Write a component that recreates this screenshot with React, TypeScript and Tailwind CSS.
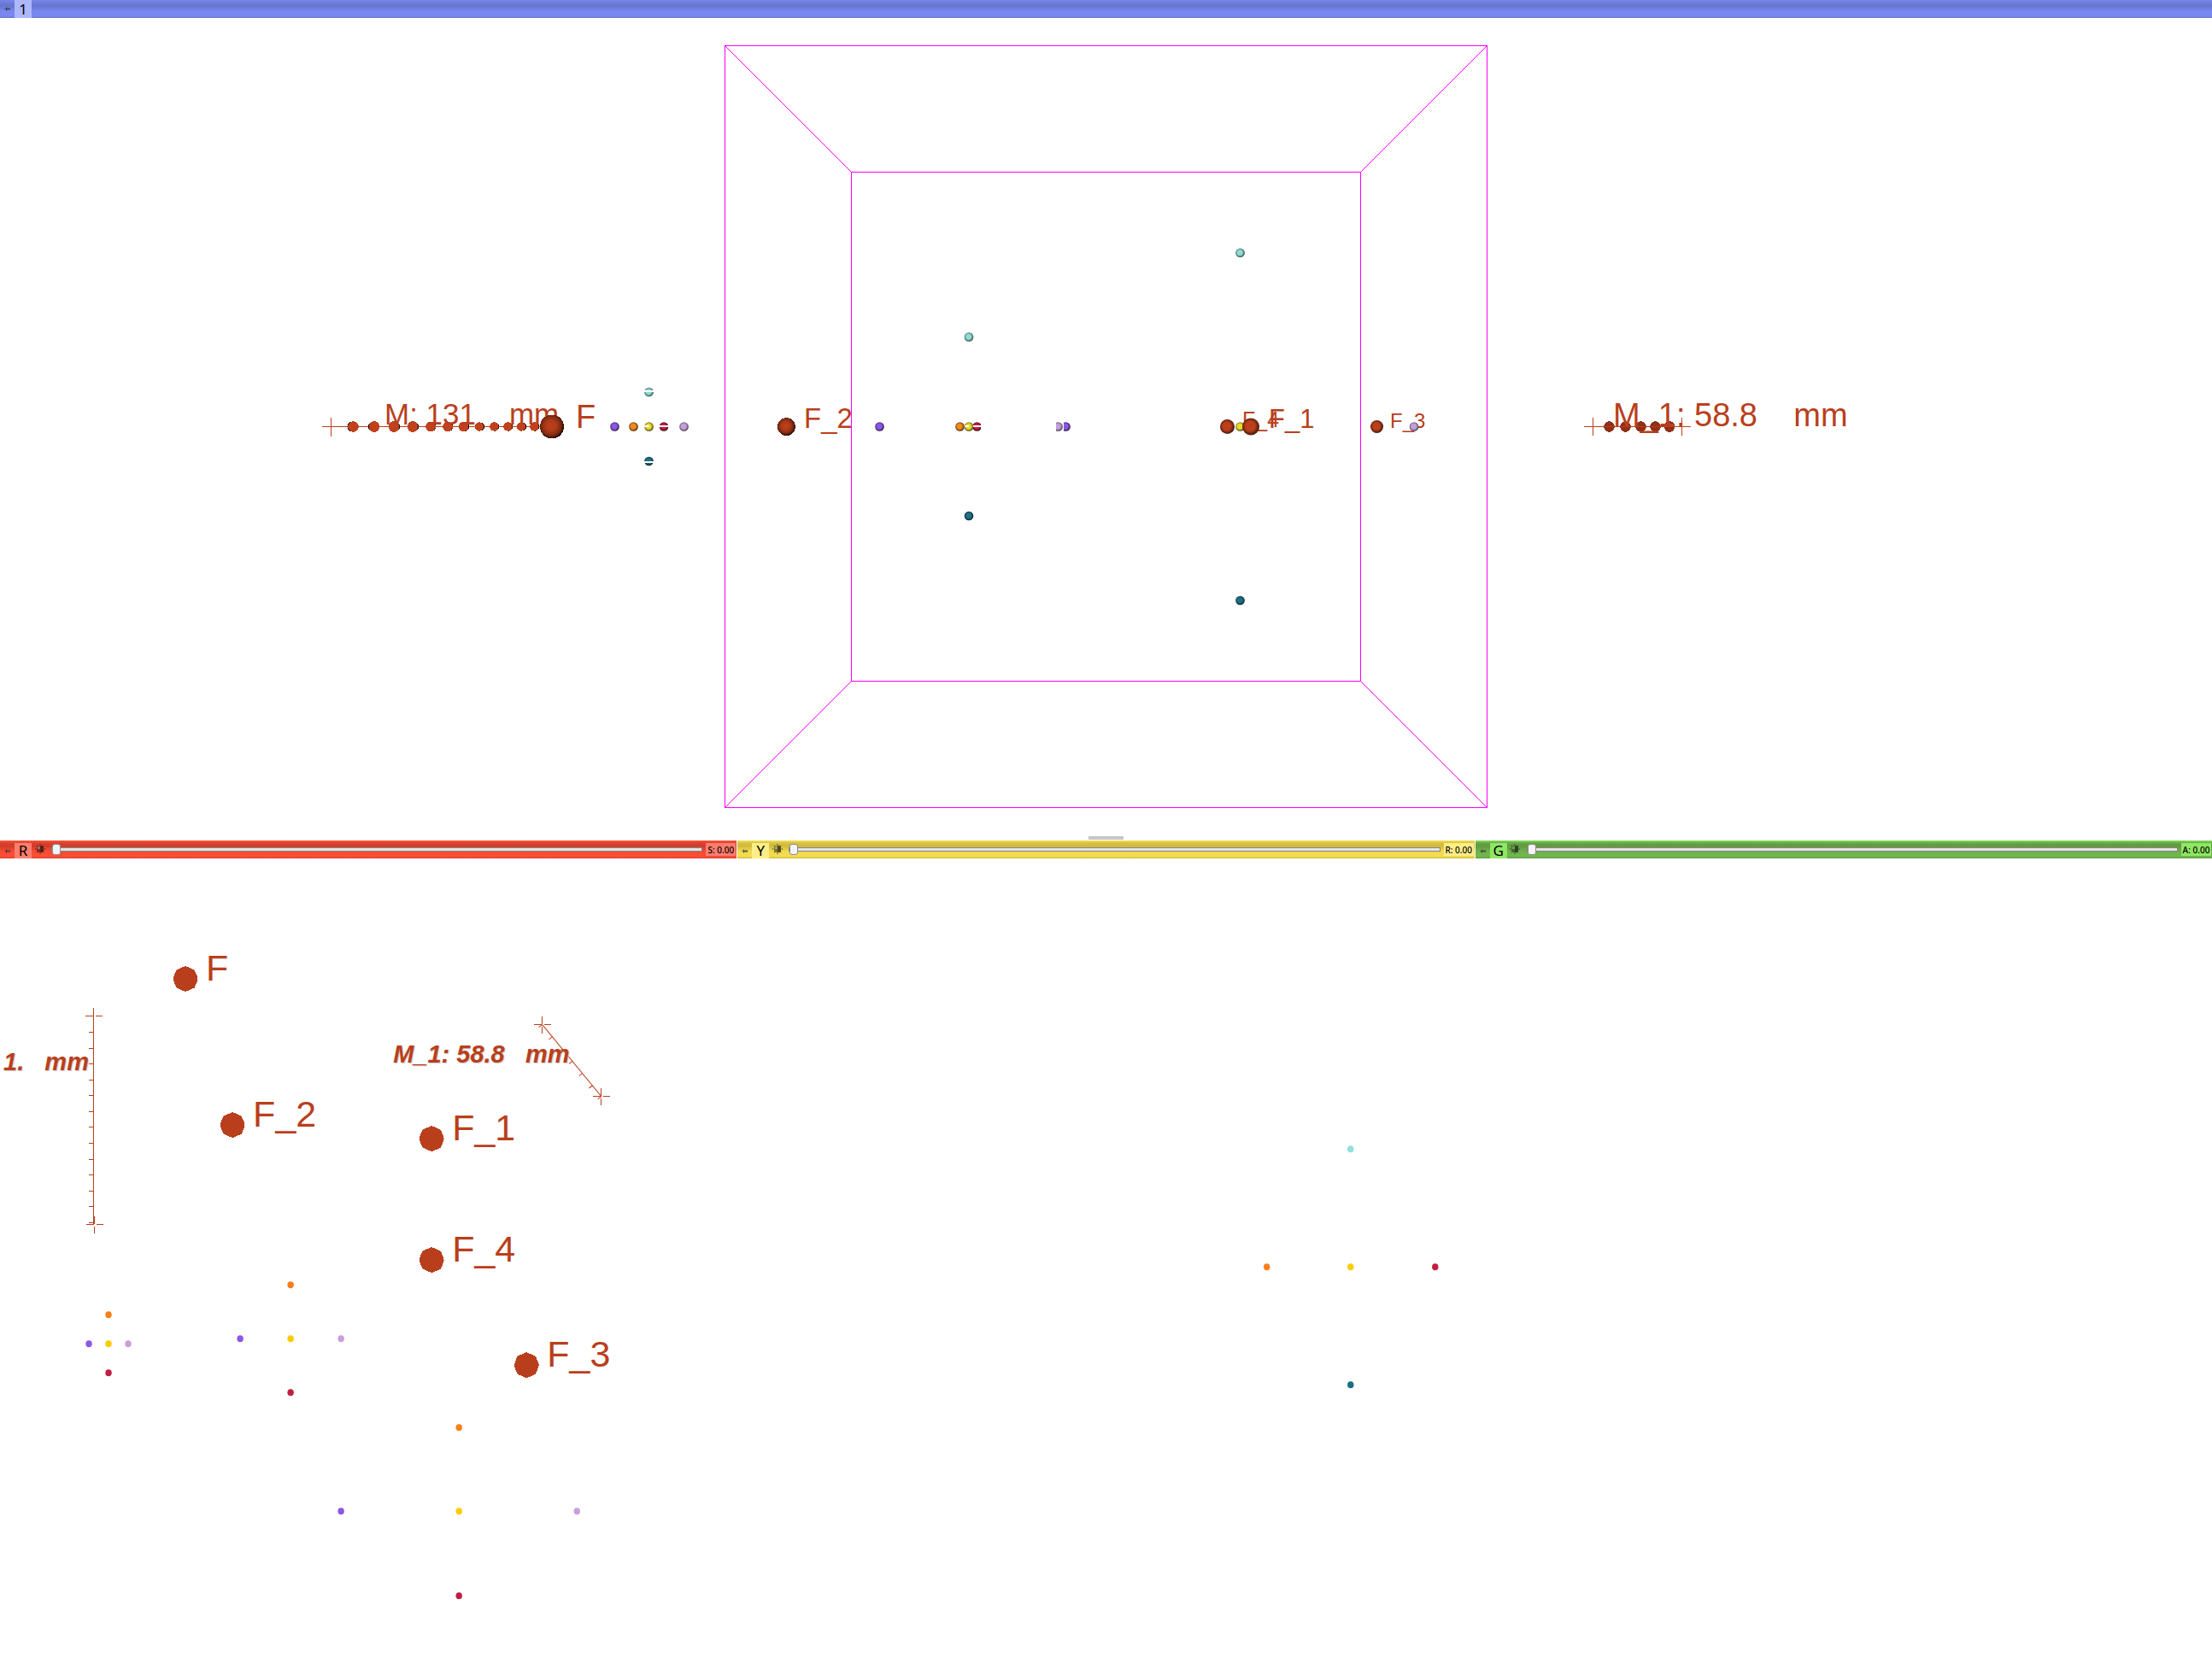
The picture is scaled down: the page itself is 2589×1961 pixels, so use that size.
import React from "react";

const RUST = "#b93f1c";
const ARIAL = '"Liberation Sans", Arial, sans-serif';

const COLORS = {
  rust: "#bc3f1b",
  purple: "#8c56e6",
  orange: "#f08a1c",
  yellow: "#eadc2c",
  crimson: "#c01f42",
  lavender: "#c3a0da",
  aqua: "#8edcd2",
  teal: "#1f7186",
} as const;

type ColorName = keyof typeof COLORS;

const EDGES: Record<ColorName, string> = {
  rust: "#5a1d0c",
  purple: "#3f2768",
  orange: "#6b3d0c",
  yellow: "#6a6414",
  crimson: "#560e1e",
  lavender: "#665472",
  aqua: "#3d6b66",
  teal: "#0c2f38",
};

const FLAT: Record<ColorName, string> = {
  rust: RUST,
  purple: "#8c56e6",
  orange: "#f97f1a",
  yellow: "#fbcc00",
  crimson: "#c01f42",
  lavender: "#c89fdc",
  aqua: "#8fe0da",
  teal: "#186f85",
};

function Sphere({ x, y = 499.5, r = 5.3, c }: { x: number; y?: number; r?: number; c: ColorName }) {
  return <circle cx={x} cy={y} r={r} fill={`url(#ball-${c})`} />;
}

function Label({ x, y, size, children, bold }: { x: number; y: number; size: number; children: string; bold?: boolean }) {
  return (
    <text
      x={x}
      y={y}
      fontSize={size}
      fontFamily={ARIAL}
      fill={RUST}
      fontWeight={bold ? 700 : 400}
      fontStyle={bold ? "italic" : "normal"}
      className={bold ? "whitespace-pre [text-shadow:1px_1px_1px_#c9c9c9]" : "whitespace-pre"}
    >
      {children}
    </text>
  );
}

function Dot({ x, y, c }: { x: number; y: number; c: ColorName }) {
  return <ellipse cx={x} cy={y} rx={3.7} ry={4} fill={FLAT[c]} />;
}

function Cross({ x, y }: { x: number; y: number }) {
  return (
    <path
      d={`M${x - 9.5} ${y}h8.5M${x + 2} ${y}h8.5M${x} ${y - 9.5}v8.5M${x} ${y + 2}v8.5`}
      stroke={RUST}
      fill="none"
      shapeRendering="crispEdges"
    />
  );
}

function Fiducial({ x, y, name }: { x: number; y: number; name: string }) {
  return (
    <>
      <path
        transform={`translate(${x} ${y})`}
        d="M0 -15L5 -13L10.5 -10.5L13 -5L14.5 0L13 5L10.5 10.5L5 13L0 15L-5 13L-10.5 10.5L-13 5L-14.5 0L-13 -5L-10.5 -10.5L-5 -13Z"
        fill={RUST}
        shapeRendering="crispEdges"
      />
      <Label x={x + 24} y={y + 2} size={43}>
        {name}
      </Label>
    </>
  );
}

function View3D() {
  const mDots = [413.5, 438, 461, 483, 504, 524, 542.5, 561, 578.5, 594.5, 610, 625.5];
  const m1Dots = [1883.5, 1902.5, 1920.5, 1937.5, 1954];
  return (
    <svg viewBox="0 21 2589 958" className="block h-auto w-full" role="img" aria-label="3D view">
      <defs>
        {(Object.keys(COLORS) as ColorName[]).map((k) => (
          <radialGradient key={k} id={`ball-${k}`} cx="0.47" cy="0.47" r="0.54">
            <stop offset="0" stopColor={COLORS[k]} />
            <stop offset="0.5" stopColor={COLORS[k]} />
            <stop offset="0.9" stopColor={EDGES[k]} />
            <stop offset="1" stopColor="#140a08" />
          </radialGradient>
        ))}
        <radialGradient id="ball-big" cx="0.46" cy="0.46" r="0.56">
          <stop offset="0" stopColor="#bc3f1b" />
          <stop offset="0.4" stopColor="#b03b19" />
          <stop offset="0.75" stopColor="#7a2811" />
          <stop offset="1" stopColor="#160603" />
        </radialGradient>
        <clipPath id="cut-crimson"><rect x="1130" y="490" width="18" height="20" /></clipPath>
        <clipPath id="cut-lavender"><rect x="1236" y="490" width="9" height="20" /></clipPath>
        <clipPath id="cut-purple"><rect x="1245" y="490" width="12" height="20" /></clipPath>
      </defs>

      <g stroke="#ff00ff" fill="none" shapeRendering="crispEdges">
        <rect x="848.5" y="53.5" width="892" height="892" />
        <rect x="996.5" y="201.5" width="596" height="596" />
        <path d="M848.5 53.5L996.5 201.5M1740.5 53.5L1592.5 201.5M848.5 945.5L996.5 797.5M1740.5 945.5L1592.5 797.5" />
      </g>

      <path d="M377 499.5H640M387.5 489V511" stroke={RUST} shapeRendering="crispEdges" />
      {mDots.map((x, i) => (
        <g key={x} shapeRendering="crispEdges">
          <circle cx={x + (i < 2 ? -1 : 1)} cy={499.5} r={i < 4 ? 6 : i < 7 ? 5.5 : 5} fill="#1a0805" />
          <circle cx={x} cy={499.5} r={i < 4 ? 6.3 : i < 7 ? 5.8 : 5.2} fill="#bf421d" />
        </g>
      ))}
      <Label x={450} y={497} size={35}>{"M: 131    mm"}</Label>
      <circle cx="646" cy="499.5" r="14" fill="url(#ball-big)" shapeRendering="crispEdges" />
      <Label x={674} y={501} size={38}>F</Label>

      <Sphere x={719.5} c="purple" />
      <Sphere x={741.5} c="orange" />
      <Sphere x={759.5} c="yellow" />
      <Sphere x={777} c="crimson" />
      <Sphere x={800.5} c="lavender" />
      <Sphere x={759.5} y={459} c="aqua" />
      <Sphere x={759.5} y={540} c="teal" />
      <path
        d="M754 458H766M754 541H766M771 499H783M754 499H760"
        stroke="#fff"
        strokeWidth="2"
        shapeRendering="crispEdges"
      />

      <circle cx="920.5" cy="499.5" r="10.5" fill="url(#ball-big)" shapeRendering="crispEdges" />
      <Label x={941} y={501} size={33}>F_2</Label>

      <Sphere x={1029.5} c="purple" />
      <g clipPath="url(#cut-crimson)"><Sphere x={1143.5} c="crimson" /></g>
      <Sphere x={1134} c="yellow" />
      <Sphere x={1123.5} c="orange" />
      <path d="M1129 499H1134M1139 499H1148" stroke="#fff" strokeWidth="2" shapeRendering="crispEdges" />
      <Sphere x={1134} y={394.5} c="aqua" />
      <Sphere x={1134} y={604} c="teal" />
      <g clipPath="url(#cut-lavender)"><Sphere x={1238.5} c="lavender" /></g>
      <g clipPath="url(#cut-purple)"><Sphere x={1247.5} c="purple" /></g>

      <Sphere x={1451.5} y={296} c="aqua" />
      <Sphere x={1451.5} y={703} c="teal" />
      <Label x={1454} y={500} size={25}>F_4</Label>
      <Sphere x={1451.5} c="yellow" />
      <Sphere x={1436.5} r={8.5} c="rust" />
      <Sphere x={1464} r={10} c="rust" />
      <Label x={1485} y={501} size={31}>F_1</Label>

      <Sphere x={1611.5} r={7.5} c="rust" />
      <Label x={1627} y={501} size={24}>F_3</Label>
      <Sphere x={1655} c="lavender" />

      {m1Dots.map((x) => (
        <circle key={x} cx={x} cy={499.5} r={6.3} fill="#8f3018" shapeRendering="crispEdges" />
      ))}
      <path d="M1854 499.5H1979M1864.5 489V510M1968.5 489V510" stroke={RUST} shapeRendering="crispEdges" />
      <Label x={1888} y={499} size={38}>{"M_1: 58.8    mm"}</Label>
    </svg>
  );
}

function RedSlice() {
  const ticks = [203.5, 222.5, 240.5, 259.5, 277.5, 296.5, 314.5, 333.5, 352.5, 370.5, 389.5, 407.5, 426.5];
  const diag = [0, 0.17, 0.34, 0.51, 0.68, 0.85, 1];
  return (
    <svg viewBox="0 0 862 950" className="block h-auto w-full" role="img" aria-label="Red slice view">
      <Fiducial x={217} y={141} name="F" />
      <Fiducial x={272} y={312} name="F_2" />
      <Fiducial x={505} y={328} name="F_1" />
      <Fiducial x={505} y={470} name="F_4" />
      <Fiducial x={616} y={593} name="F_3" />

      <path d="M109.5 184V428" stroke={RUST} shapeRendering="crispEdges" />
      {ticks.map((y) => (
        <path key={y} d={`M104 ${y}H109`} stroke={RUST} shapeRendering="crispEdges" />
      ))}
      <Cross x={109.5} y={184.5} />
      <Cross x={110.5} y={428.5} />
      <Label x={4} y={248} size={29} bold>{"1.   mm"}</Label>

      <path d="M634.5 194.5L703.5 278.5" stroke={RUST} />
      {diag.map((t) => (
        <path key={t} d={`M${634.5 + 69 * t} ${194.5 + 84 * t}l-4 3`} stroke={RUST} />
      ))}
      <Cross x={634.5} y={194.5} />
      <Cross x={703.5} y={278.5} />
      <Label x={460} y={239} size={29} bold>{"M_1: 58.8   mm"}</Label>

      <Dot x={127} y={534} c="orange" />
      <Dot x={104} y={568} c="purple" />
      <Dot x={127} y={568} c="yellow" />
      <Dot x={150} y={568} c="lavender" />
      <Dot x={127} y={602} c="crimson" />

      <Dot x={340} y={499} c="orange" />
      <Dot x={281} y={562} c="purple" />
      <Dot x={340} y={562} c="yellow" />
      <Dot x={399} y={562} c="lavender" />
      <Dot x={340} y={625} c="crimson" />

      <Dot x={537} y={666} c="orange" />
      <Dot x={399} y={764} c="purple" />
      <Dot x={537} y={764} c="yellow" />
      <Dot x={675} y={764} c="lavender" />
      <Dot x={537} y={863} c="crimson" />
    </svg>
  );
}

function YellowSlice() {
  return (
    <svg viewBox="0 0 862 950" className="block h-auto w-full" role="img" aria-label="Yellow slice view">
      <Dot x={717.5} y={340} c="aqua" />
      <Dot x={619.5} y={478} c="orange" />
      <Dot x={717.5} y={478} c="yellow" />
      <Dot x={816.5} y={478} c="crimson" />
      <Dot x={717.5} y={616} c="teal" />
    </svg>
  );
}

function PinButton() {
  return (
    <button type="button" aria-label="Pin" className="flex h-full w-[17px] shrink-0 items-center justify-center">
      <svg width="7" height="5" viewBox="0 0 7 5" aria-hidden="true">
        <path d="M0 2.5H2" stroke="#333" strokeOpacity="0.6" />
        <path d="M2.5 0.5V4.5" stroke="#222" strokeOpacity="0.75" />
        <path d="M3 1.5H6V3.5H3Z" fill="#444" fillOpacity="0.8" />
        <path d="M6.5 1V4" stroke="#333" strokeOpacity="0.6" />
      </svg>
    </button>
  );
}

function CenterButton({ ball }: { ball: string }) {
  return (
    <button type="button" aria-label="Fit to window" className="flex h-full w-[19px] shrink-0 items-center justify-center pb-1">
      <svg width="12" height="12" viewBox="0 0 12 12" aria-hidden="true">
        <path d="M6 0V1.2M6 10.8V12M0 6H1.2M10.8 6H12M1.8 1.8L2.6 2.6M10.2 1.8L9.4 2.6M1.8 10.2L2.6 9.4M10.2 10.2L9.4 9.4" stroke="#222" />
        <rect x="2" y="2" width="8" height="8" rx="2" fill={ball} />
        <path d="M6 2H8.5Q10 2 10 4V8Q10 10 8 10H6Z" fill="#1a1a1a" fillOpacity="0.5" />
        <rect x="3" y="3" width="3" height="3" fill="#fff" fillOpacity="0.3" />
      </svg>
    </button>
  );
}

type BarProps = { letter: string; value: string; bar: string; chip: string; ball: string };

function SliceBar({ letter, value, bar, chip, ball }: BarProps) {
  return (
    <div className={`flex h-[21px] items-stretch pt-[3px] text-black ${bar}`}>
      <PinButton />
      <span className={`flex w-5 shrink-0 items-center justify-center pb-0.5 text-[17px] leading-none ${chip}`}>{letter}</span>
      <CenterButton ball={ball} />
      <input
        type="range"
        min={0}
        max={100}
        defaultValue={0}
        aria-label={`${letter} slice offset`}
        className="mx-1 h-[15px] min-w-0 flex-1 appearance-none bg-transparent [&::-webkit-slider-runnable-track]:h-[5px] [&::-webkit-slider-runnable-track]:border [&::-webkit-slider-runnable-track]:border-[#858585] [&::-webkit-slider-runnable-track]:bg-[#e4e4e4] [&::-webkit-slider-thumb]:-mt-[5px] [&::-webkit-slider-thumb]:h-[13px] [&::-webkit-slider-thumb]:w-[10px] [&::-webkit-slider-thumb]:appearance-none [&::-webkit-slider-thumb]:rounded-[3px] [&::-webkit-slider-thumb]:border [&::-webkit-slider-thumb]:border-[#8c8c8c] [&::-webkit-slider-thumb]:bg-[#f4f4f4]"
      />
      <output className={`mr-px flex h-[15px] w-[35px] shrink-0 items-center justify-center whitespace-nowrap text-[10px] font-medium leading-none ${chip}`}>
        {value}
      </output>
    </div>
  );
}

export default function App() {
  return (
    <main className='min-h-screen overflow-hidden bg-white font-["Noto_Sans",sans-serif]'>
      <section>
        <header className="flex h-[21px] bg-[linear-gradient(#7888ea_0%,#6675cf_28%,#6675cf_32%,#7888f0_62%,#7888f0_90%,#6272cc_100%)]">
          <PinButton />
          <span className="flex w-5 items-center justify-center bg-[#adb7fc] text-[17px] leading-none text-black">1</span>
        </header>
        <View3D />
      </section>
      <div className="flex h-[5px] justify-center" role="separator" aria-orientation="horizontal">
        <span className="h-1 w-[41px] border border-[#c4c4c4] bg-[#c8c8c8]" />
      </div>
      <div className="grid grid-cols-3 gap-px">
        <section className="min-w-0">
          <SliceBar
            letter="R"
            value="S: 0.00"
            bar="bg-[linear-gradient(#ff5a40_0%,#dc402c_14%,#cf3d29_30%,#f64a33_60%,#ff4e36_90%,#d03f2b_100%)]"
            chip="bg-[#ff7d6e]"
            ball="#8a2a1c"
          />
          <RedSlice />
        </section>
        <section className="min-w-0">
          <SliceBar
            letter="Y"
            value="R: 0.00"
            bar="bg-[linear-gradient(#f8e258_0%,#d8c23f_14%,#cfba3e_30%,#efd94e_60%,#f5dd4e_90%,#c9b440_100%)]"
            chip="bg-[#ffee88]"
            ball="#847628"
          />
          <YellowSlice />
        </section>
        <section className="min-w-0">
          <SliceBar
            letter="G"
            value="A: 0.00"
            bar="bg-[linear-gradient(#86e65c_0%,#65a646_14%,#61993f_30%,#6fb04c_60%,#72b84e_90%,#5c9840_100%)]"
            chip="bg-[#8fe663]"
            ball="#3f6a2c"
          />
        </section>
      </div>
    </main>
  );
}
